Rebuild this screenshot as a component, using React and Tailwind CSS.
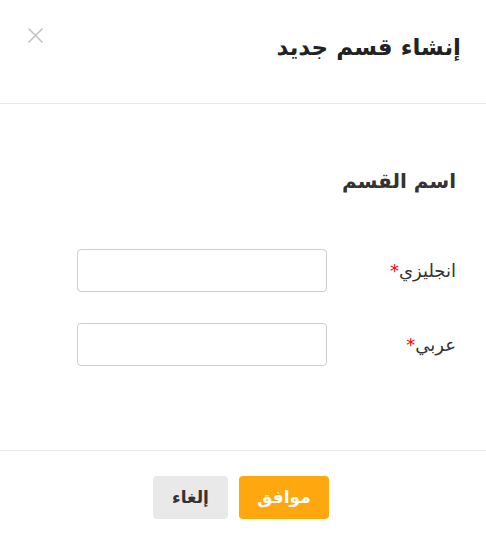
import React from 'react';

const App = () => {
  return (
    <div dir="rtl" className="w-[486px] h-[543px] bg-white text-[#333] flex flex-col" style={{ fontFamily: '"DejaVu Sans", "Noto Sans", sans-serif' }}>
      {/* Header */}
      <div className="h-[104px] border-b border-[#e9e9e9] flex items-center justify-between pr-[25px] pl-[27px] relative">
        <h1 className="text-[23px] font-bold text-[#222] -mt-[8px]">إنشاء قسم جديد</h1>
        <button className="absolute left-[27px] top-[27px] text-[#c4c4c4]">
          <svg width="17" height="17" viewBox="0 0 17 17" fill="none" stroke="currentColor" strokeWidth="1.6">
            <path d="M1.5 1.5L15.5 15.5M15.5 1.5L1.5 15.5" />
          </svg>
        </button>
      </div>

      {/* Body */}
      <div className="flex-1 pr-[30px] pt-[62px]">
        <h2 className="text-[20px] font-bold text-[#333] mb-[53px]">اسم القسم</h2>

        <div className="flex items-center mb-[31px]">
          <label className="w-[129px] text-[18px] text-[#333]">
            انجليزي<span className="text-[#f00]">*</span>
          </label>
          <input className="w-[250px] h-[43px] border border-[#ccc] rounded-[4px] outline-none" />
        </div>

        <div className="flex items-center">
          <label className="w-[129px] text-[18px] text-[#333]">
            عربي<span className="text-[#f00]">*</span>
          </label>
          <input className="w-[250px] h-[43px] border border-[#ccc] rounded-[4px] outline-none" />
        </div>
      </div>

      {/* Footer */}
      <div className="h-[93px] border-t border-[#e9e9e9] flex justify-center items-start pt-[25px] gap-[11px] pr-[4px]">
        <button className="w-[90px] h-[43px] bg-[#ffa70f] text-white font-bold text-[17px] rounded-[4px]">موافق</button>
        <button className="w-[75px] h-[43px] bg-[#e9e9e9] text-[#333] font-bold text-[17px] rounded-[4px]">إلغاء</button>
      </div>
    </div>
  );
};

export default App;
